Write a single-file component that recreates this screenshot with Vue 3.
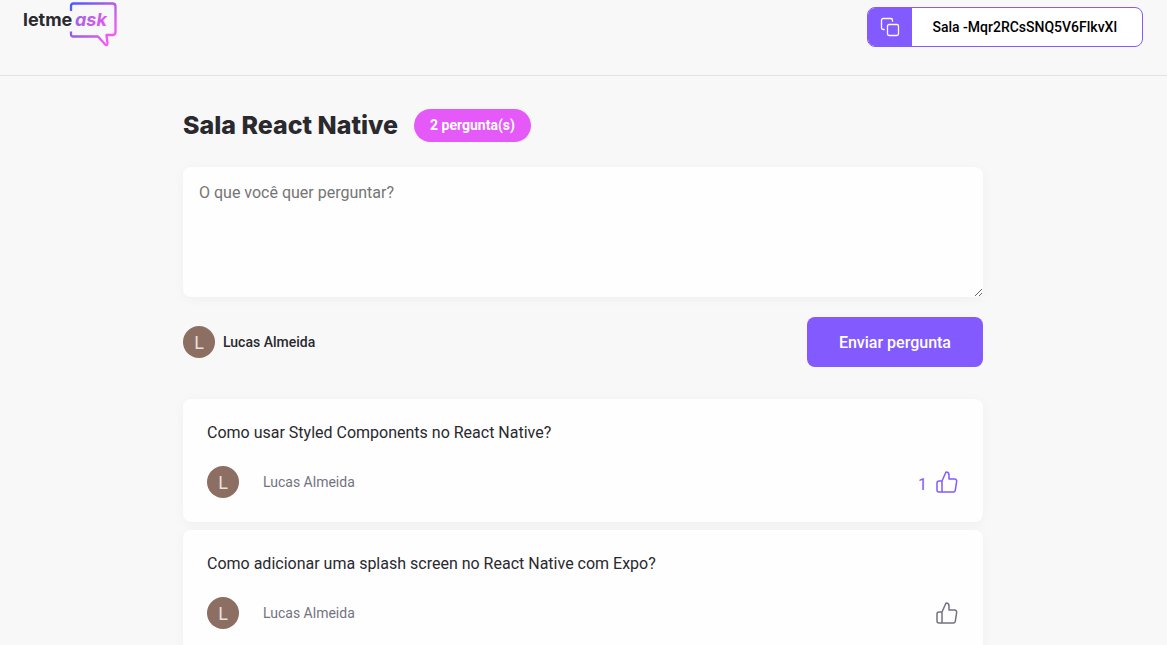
<script setup>
import { ref } from 'vue'

const roomCode = '-Mqr2RCsSNQ5V6FlkvXl'
const user = 'Lucas Almeida'
const newQuestion = ref('')
const questions = ref([
  { id: 1, content: 'Como usar Styled Components no React Native?', author: 'Lucas Almeida', likes: 1, liked: true },
  { id: 2, content: 'Como adicionar uma splash screen no React Native com Expo?', author: 'Lucas Almeida', likes: 0, liked: false },
])

function toggleLike(question) {
  question.liked = !question.liked
  question.likes += question.liked ? 1 : -1
}

function sendQuestion() {
  const content = newQuestion.value.trim()
  if (!content) return
  questions.value.push({ id: Date.now(), content, author: user, likes: 0, liked: false })
  newQuestion.value = ''
}
</script>

<template>
  <div class="page">
    <header class="header">
      <div class="header-content">
        <svg class="logo" width="96" height="46" viewBox="1 0 96 46" role="img" aria-label="letmeask">
          <defs>
            <linearGradient id="bubble" gradientUnits="userSpaceOnUse" x1="47" y1="2" x2="88" y2="40">
              <stop offset="0" stop-color="#485bff" />
              <stop offset="0.5" stop-color="#a45ee6" />
              <stop offset="1" stop-color="#ff59f8" />
            </linearGradient>
            <linearGradient id="word" gradientUnits="userSpaceOnUse" x1="51" y1="12" x2="84" y2="26">
              <stop offset="0" stop-color="#9a62e6" />
              <stop offset="1" stop-color="#e35af0" />
            </linearGradient>
          </defs>
          <path
            d="M48 9V4Q48 1.500 50.500 1.500H89.500Q92.500 1.500 92.500 4.500V30Q92.500 33 89.500 33H83.500L84.500 41.500Q84.300 44 82.500 42.700L75 34.500H50.500Q48 34.500 48 32.500V29.500"
            fill="none" stroke="url(#bubble)" stroke-width="2.300" stroke-linejoin="round"
          />
          <text x="0" y="24" class="logo-text" fill="#29292e">letme</text>
          <text x="52" y="24" class="logo-text logo-ask" fill="url(#word)">ask</text>
        </svg>
        <button class="room-code" type="button">
          <span class="copy">
            <svg width="20" height="20" viewBox="0 0 20 20" fill="none" stroke="#fff" stroke-width="1.300" stroke-linecap="round" stroke-linejoin="round" aria-hidden="true">
              <rect x="7.500" y="7.500" width="11" height="11" rx="1.700" />
              <path d="M4.200 12.500H3.200A1.700 1.700 0 0 1 1.500 10.800V3.200A1.700 1.700 0 0 1 3.200 1.500H10.800A1.700 1.700 0 0 1 12.500 3.200V4.200" />
            </svg>
          </span>
          <span class="code">Sala {{ roomCode }}</span>
        </button>
      </div>
    </header>

    <main class="main">
      <div class="room-title">
        <h1>Sala React Native</h1>
        <span class="badge">{{ questions.length }} pergunta(s)</span>
      </div>

      <form @submit.prevent="sendQuestion">
        <textarea v-model="newQuestion" aria-label="O que você quer perguntar?" placeholder="O que você quer perguntar?"></textarea>
        <div class="form-footer">
          <div class="user">
            <span class="avatar" aria-hidden="true">L</span>
            <span class="user-name">{{ user }}</span>
          </div>
          <button class="send" type="submit">Enviar pergunta</button>
        </div>
      </form>

      <div class="questions">
        <article v-for="question in questions" :key="question.id" class="question">
          <p>{{ question.content }}</p>
          <footer>
            <div class="author">
              <span class="avatar" aria-hidden="true">L</span>
              <span>{{ question.author }}</span>
            </div>
            <button class="like" :class="{ liked: question.liked }" type="button" aria-label="Marcar como gostei" @click="toggleLike(question)">
              <span v-if="question.likes > 0">{{ question.likes }}</span>
              <svg width="24" height="24" viewBox="0 0 24 24" fill="none" stroke="currentColor" stroke-width="1.500" stroke-linecap="round" stroke-linejoin="round" aria-hidden="true">
                <path d="M7 22H4a2 2 0 0 1-2-2v-7a2 2 0 0 1 2-2h3M14 9V5a3 3 0 0 0-3-3L7 11v11h11.280a2 2 0 0 0 2-1.700l1.380-9a2 2 0 0 0-2-2.300H14z" />
              </svg>
            </button>
          </footer>
        </article>
      </div>
    </main>
  </div>
</template>

<style>
body {
  background: #f8f8f8;
}
</style>

<style scoped>
* {
  box-sizing: border-box;
}

.page {
  color: #29292e;
  font: 400 16px/19px Roboto, sans-serif;
}

button,
textarea {
  font: inherit;
}

button {
  cursor: pointer;
}

.header {
  padding: 2px 24px 27px;
  border-bottom: 1px solid #e2e2e2;
}

.header-content {
  display: flex;
  justify-content: space-between;
  align-items: flex-start;
  max-width: 1120px;
  margin: 0 auto;
}

.logo {
  overflow: visible;
}

.logo-text {
  font: 700 18px Inter, sans-serif;
}

.logo-ask {
  font-style: italic;
}

.room-code {
  display: flex;
  height: 40px;
  margin-top: 5px;
  padding: 0;
  overflow: hidden;
  border: 1px solid #835afd;
  border-radius: 8px;
  background: #fff;
  color: #000;
}

.copy {
  display: flex;
  align-items: center;
  height: 100%;
  padding: 0 12px;
  background: #835afd;
}

.code {
  align-self: center;
  padding: 0 25px 0 20px;
  font-size: 14px;
  font-weight: 500;
}

.main {
  max-width: 847px;
  margin: 0 auto;
  padding: 31px 24px 32px 23px;
}

.room-title {
  display: flex;
  align-items: center;
  gap: 16px;
  margin-bottom: 24px;
}

h1 {
  margin: 0;
  font: 800 25px/36px Inter, sans-serif;
}

.badge {
  padding: 8px 16px;
  border-radius: 24px;
  background: #e559f9;
  color: #fff;
  font-size: 14px;
  font-weight: 700;
  line-height: 17px;
}

textarea {
  display: block;
  width: 100%;
  min-height: 130px;
  padding: 16px;
  border: 0;
  border-radius: 8px;
  background: #fefefe;
  box-shadow: 0 2px 12px rgba(0, 0, 0, 0.04);
  resize: vertical;
}

textarea::placeholder {
  color: #757575;
}

.form-footer {
  display: flex;
  justify-content: space-between;
  align-items: center;
  margin-top: 20px;
}

.user,
.author {
  display: flex;
  align-items: center;
  font-size: 14px;
}

.user {
  gap: 8px;
  font-weight: 500;
}

.author {
  gap: 24px;
  color: #737380;
}

.avatar {
  display: grid;
  place-items: center;
  width: 32px;
  height: 32px;
  border-radius: 50%;
  background: #8d6e63;
  color: #e8e0dd;
  font-size: 18px;
  font-weight: 400;
}

.send {
  height: 50px;
  padding: 0 32px;
  border: 0;
  border-radius: 8px;
  background: #835afd;
  color: #fff;
  font-weight: 500;
}

.questions {
  display: grid;
  gap: 8px;
  margin-top: 32px;
}

.question {
  padding: 24px;
  border-radius: 8px;
  background: #fefefe;
  box-shadow: 0 2px 12px rgba(0, 0, 0, 0.04);
}

.question p {
  margin: 0;
}

.question footer {
  display: flex;
  justify-content: space-between;
  align-items: center;
  margin-top: 24px;
}

.like {
  display: flex;
  align-items: flex-end;
  gap: 8px;
  padding: 0;
  border: 0;
  background: transparent;
  color: #737380;
}

.liked {
  color: #835afd;
}
</style>
